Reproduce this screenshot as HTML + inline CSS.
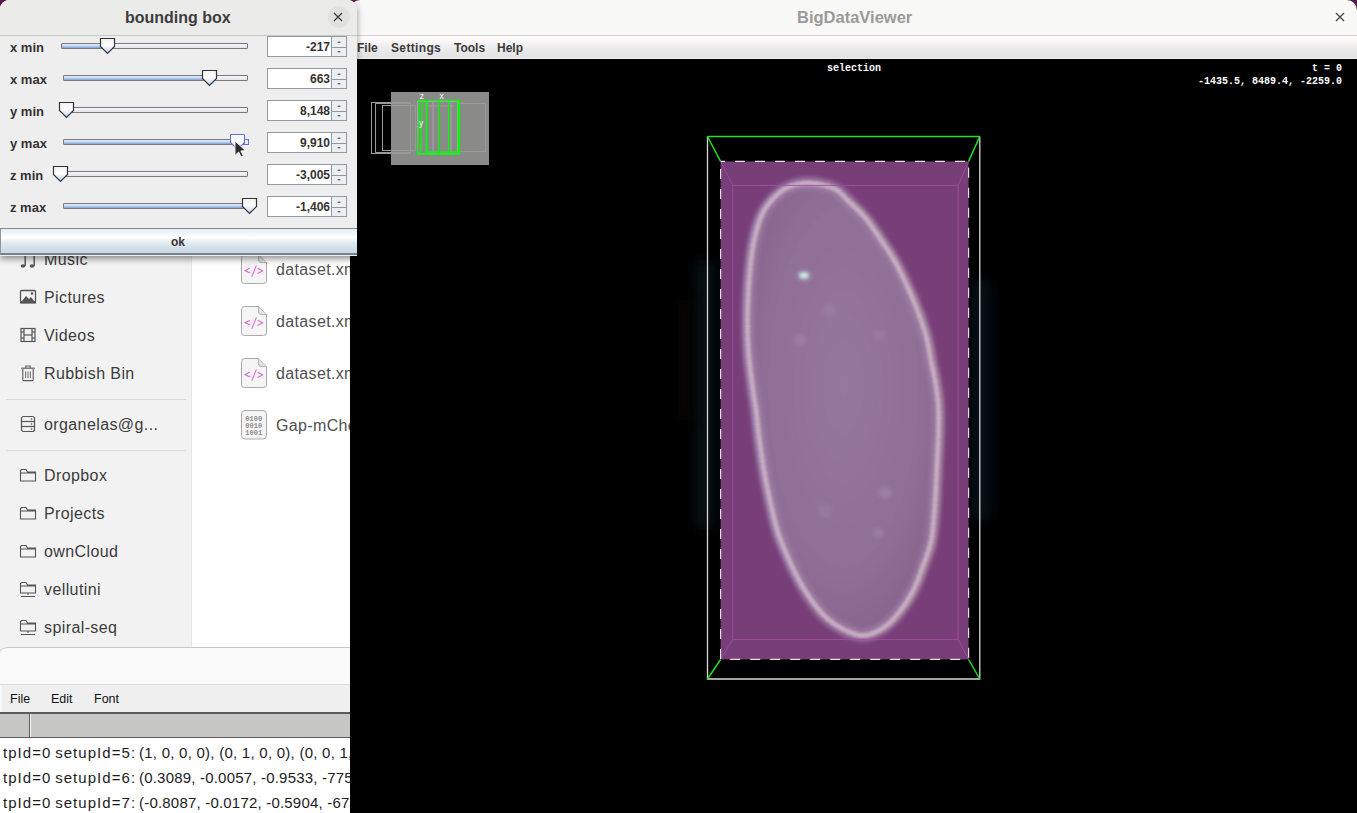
<!DOCTYPE html>
<html><head><meta charset="utf-8">
<style>
*{margin:0;padding:0;box-sizing:border-box}
html,body{width:1357px;height:813px;overflow:hidden;background:#5a1c50;font-family:"Liberation Sans",sans-serif}
.abs{position:absolute}
#fm{left:0;top:0;width:350px;height:647px;background:#fff;overflow:hidden;border-radius:10px 0 0 0}
#side{left:0;top:0;width:192px;height:647px;background:#f2f2f2;border-right:1px solid #e6e6e6}
.si{position:absolute;left:44px;font-size:16px;letter-spacing:.4px;color:#3c3c3c;line-height:16px;white-space:nowrap}
.sic{position:absolute;left:19px;width:18px;height:18px}
.sep{position:absolute;left:6px;width:180px;height:1px;background:#dadada}
.fi{position:absolute;left:276px;font-size:16px;letter-spacing:.35px;color:#505050;line-height:16px;white-space:nowrap}
.fic{position:absolute;left:240px;width:28px;height:32px}
#bw{left:0;top:647px;width:350px;height:166px;background:#fff;overflow:hidden}
#dlg{left:0;top:0;width:357px;height:256px;background:#eeeeee;border-radius:9px 9px 0 0;box-shadow:0 3px 6px rgba(0,0,0,.42)}
.lab{position:absolute;left:10px;font-weight:bold;font-size:13px;color:#333;line-height:13px;white-space:nowrap}
.trk{position:absolute;height:6px;border:1px solid #7a7a7a;background:linear-gradient(#f8f8fb,#e2e5ee);border-radius:1px}
.fill{position:absolute;left:0;top:0;bottom:0;background:linear-gradient(#e2ecf8,#bcd0ee 55%,#7c9cdc)}
.spn{position:absolute;left:267px;width:80px;height:21px;border:1px solid #8f9aa6;background:#fff}
.spn .v{position:absolute;right:16px;top:4px;font-weight:bold;font-size:12px;color:#333;line-height:12px}
.spn .b{position:absolute;right:0;top:0;width:15px;height:19px;background:#eceff2;border-left:1px solid #8f9aa6}
.spn .b:after{content:"";position:absolute;left:0;right:0;top:9.5px;height:1.5px;background:#8e98a0}
.ar{position:absolute;left:5px;width:0;height:0;border-left:2.5px solid transparent;border-right:2.5px solid transparent}
#bdv{left:350px;top:0;width:1007px;height:813px;background:#000;overflow:hidden;border-radius:10px 10px 0 0}
.mono{font-family:"Liberation Mono",monospace;font-weight:bold;font-size:10px;color:#fff;line-height:10px;white-space:nowrap}
.mb{position:absolute;top:41.5px;font-weight:bold;font-size:12px;color:#3a3a3a;line-height:12px}
.tp{letter-spacing:1.05px;word-spacing:-1.5px}
.tl{position:absolute;left:3px;font-size:15px;line-height:15px;white-space:nowrap;color:#1c1c1c}
</style></head><body>

<!-- FILE MANAGER -->
<div id="fm" class="abs">
  <div id="side" class="abs">
    <!-- Music -->
    <svg class="sic" style="top:251px" viewBox="0 0 18 18"><g fill="#555"><ellipse cx="4" cy="15" rx="2.3" ry="1.8"/><ellipse cx="13" cy="15" rx="2.3" ry="1.8"/><rect x="5.5" y="3" width="1.4" height="12"/><rect x="14.5" y="3" width="1.4" height="12"/></g></svg>
    <div class="si" style="top:252px">Music</div>
    <!-- Pictures -->
    <svg class="sic" style="top:288px" viewBox="0 0 18 18"><rect x="1.5" y="2.5" width="15" height="12" rx="1" fill="none" stroke="#555" stroke-width="1.3"/><rect x="1" y="13" width="16" height="2.5" fill="#555"/><path d="M3 13 L7 8 L10 11 L12 9 L15 13Z" fill="#555"/><circle cx="13" cy="5.5" r="1.3" fill="#555"/></svg>
    <div class="si" style="top:290px">Pictures</div>
    <!-- Videos -->
    <svg class="sic" style="top:326px" viewBox="0 0 18 18"><rect x="2" y="2.5" width="14" height="13" fill="none" stroke="#555" stroke-width="1.2"/><line x1="5" y1="2.5" x2="5" y2="15.5" stroke="#555" stroke-width="1.2"/><line x1="13" y1="2.5" x2="13" y2="15.5" stroke="#555" stroke-width="1.2"/><line x1="5" y1="9" x2="13" y2="9" stroke="#555" stroke-width="1.2"/><g stroke="#555" stroke-width="1.2"><line x1="2" y1="6" x2="5" y2="6"/><line x1="2" y1="12" x2="5" y2="12"/><line x1="13" y1="6" x2="16" y2="6"/><line x1="13" y1="12" x2="16" y2="12"/></g></svg>
    <div class="si" style="top:328px">Videos</div>
    <!-- Rubbish -->
    <svg class="sic" style="top:364px" viewBox="0 0 18 18"><g fill="none" stroke="#5a5a5a" stroke-width="1.1"><path d="M3.8 5 V15.5 Q3.8 16.6 4.9 16.6 H13.1 Q14.2 16.6 14.2 15.5 V5"/><line x1="2.2" y1="4.2" x2="15.8" y2="4.2"/><path d="M6.8 4 V2 H11.2 V4"/></g><g stroke="#5a5a5a" stroke-width=".9"><line x1="6.6" y1="7.5" x2="6.6" y2="14.2"/><line x1="9" y1="7.5" x2="9" y2="14.2"/><line x1="11.4" y1="7.5" x2="11.4" y2="14.2"/></g></svg>
    <div class="si" style="top:366px">Rubbish Bin</div>
    <div class="sep" style="top:399px"></div>
    <!-- organelas -->
    <svg class="sic" style="top:415px" viewBox="0 0 18 18"><g fill="none" stroke="#555" stroke-width="1.2"><rect x="2.5" y="1.5" width="13" height="15" rx="2"/><line x1="2.5" y1="6.5" x2="15.5" y2="6.5"/><line x1="2.5" y1="11.5" x2="15.5" y2="11.5"/></g><circle cx="12.5" cy="4" r=".8" fill="#555"/><circle cx="12.5" cy="9" r=".8" fill="#555"/><circle cx="12.5" cy="14" r=".8" fill="#555"/></svg>
    <div class="si" style="top:417px">organelas@g...</div>
    <div class="sep" style="top:450px"></div>
    <!-- folders -->
    <svg class="sic" style="top:466px" viewBox="0 0 18 18"><path d="M1.5 4.5 V15 H16.5 V6 H8.5 L7 3.5 H2.5Z M1.5 7 H16.5" fill="none" stroke="#555" stroke-width="1.1"/></svg>
    <div class="si" style="top:468px">Dropbox</div>
    <svg class="sic" style="top:504px" viewBox="0 0 18 18"><path d="M1.5 4.5 V15 H16.5 V6 H8.5 L7 3.5 H2.5Z M1.5 7 H16.5" fill="none" stroke="#555" stroke-width="1.1"/></svg>
    <div class="si" style="top:506px">Projects</div>
    <svg class="sic" style="top:542px" viewBox="0 0 18 18"><path d="M1.5 4.5 V15 H16.5 V6 H8.5 L7 3.5 H2.5Z M1.5 7 H16.5" fill="none" stroke="#555" stroke-width="1.1"/></svg>
    <div class="si" style="top:544px">ownCloud</div>
    <svg class="sic" style="top:580px" viewBox="0 0 18 18"><path d="M1.5 3.5 V13 H16.5 V5 H8.5 L7 2.5 H2.5Z M1.5 6 H16.5 M9 13 V15 M2 16.5 H16" fill="none" stroke="#555" stroke-width="1.1"/></svg>
    <div class="si" style="top:582px">vellutini</div>
    <svg class="sic" style="top:618px" viewBox="0 0 18 18"><path d="M1.5 3.5 V13 H16.5 V5 H8.5 L7 2.5 H2.5Z M1.5 6 H16.5 M9 13 V15 M2 16.5 H16" fill="none" stroke="#555" stroke-width="1.1"/></svg>
    <div class="si" style="top:620px">spiral-seq</div>
  </div>
  <!-- files -->
  <svg class="fic" style="top:254px" viewBox="0 0 28 32"><path d="M4.5 0.5 H18.5 L26.5 8.5 V26.5 Q26.5 29.5 23.5 29.5 H4.5 Q1.5 29.5 1.5 26.5 V3.5 Q1.5 0.5 4.5 0.5Z" fill="#f5f5f5" stroke="#a9a9a9" stroke-width="1"/><path d="M18.5 0.5 V6 Q18.5 8.5 21 8.5 H26.5" fill="#e2e2e2" stroke="#b5b5b5" stroke-width="1"/><path d="M9.7 14.2 L5 16.7 L10.3 19.1 M16.4 11.4 L11.8 22.8 M17.7 14.2 L22.6 17 L17.4 19.4" fill="none" stroke="#e06ad8" stroke-width="1.1"/></svg>
  <div class="fi" style="top:262px">dataset.xml</div>
  <svg class="fic" style="top:306px" viewBox="0 0 28 32"><path d="M4.5 0.5 H18.5 L26.5 8.5 V26.5 Q26.5 29.5 23.5 29.5 H4.5 Q1.5 29.5 1.5 26.5 V3.5 Q1.5 0.5 4.5 0.5Z" fill="#f5f5f5" stroke="#a9a9a9" stroke-width="1"/><path d="M18.5 0.5 V6 Q18.5 8.5 21 8.5 H26.5" fill="#e2e2e2" stroke="#b5b5b5" stroke-width="1"/><path d="M9.7 14.2 L5 16.7 L10.3 19.1 M16.4 11.4 L11.8 22.8 M17.7 14.2 L22.6 17 L17.4 19.4" fill="none" stroke="#e06ad8" stroke-width="1.1"/></svg>
  <div class="fi" style="top:314px">dataset.xml</div>
  <svg class="fic" style="top:358px" viewBox="0 0 28 32"><path d="M4.5 0.5 H18.5 L26.5 8.5 V26.5 Q26.5 29.5 23.5 29.5 H4.5 Q1.5 29.5 1.5 26.5 V3.5 Q1.5 0.5 4.5 0.5Z" fill="#f5f5f5" stroke="#a9a9a9" stroke-width="1"/><path d="M18.5 0.5 V6 Q18.5 8.5 21 8.5 H26.5" fill="#e2e2e2" stroke="#b5b5b5" stroke-width="1"/><path d="M9.7 14.2 L5 16.7 L10.3 19.1 M16.4 11.4 L11.8 22.8 M17.7 14.2 L22.6 17 L17.4 19.4" fill="none" stroke="#e06ad8" stroke-width="1.1"/></svg>
  <div class="fi" style="top:366px">dataset.xml</div>
  <svg class="fic" style="top:410px" viewBox="0 0 28 32"><path d="M5 0.5 H23 Q26.5 0.5 26.5 4 V25.5 Q26.5 29 23 29 H5 Q1.5 29 1.5 25.5 V4 Q1.5 0.5 5 0.5Z" fill="#f5f5f5" stroke="#a9a9a9" stroke-width="1"/><g font-family="Liberation Mono" font-size="7" font-weight="bold" fill="#8c8c8c"><text x="5.3" y="10.8">0100</text><text x="5.3" y="17.6">0010</text><text x="5.3" y="24.8">1001</text></g></svg>
  <div class="fi" style="top:418px">Gap-mCherry</div>
</div>

<!-- BOTTOM WINDOW -->
<div id="bw" class="abs">
  <div class="abs" style="left:0;top:0;width:350px;height:20px;background:#f2f2f2"></div>
  <div class="abs" style="left:-4px;top:0;width:364px;height:38px;background:#fafafa;border-top:1px solid #c9c9c9;border-left:1px solid #c9c9c9;border-radius:12px 0 0 0;border-bottom:1px solid #dcdcdc"></div>
  <div class="abs" style="left:0;top:38px;width:350px;height:27px;background:#efefef;border-left:2px solid #f8f8f8"></div>
  <div class="abs" style="left:10px;top:45.5px;font-size:12.5px;line-height:13px;color:#111">File</div>
  <div class="abs" style="left:51px;top:45.5px;font-size:12.5px;line-height:13px;color:#111">Edit</div>
  <div class="abs" style="left:94px;top:45.5px;font-size:12.5px;line-height:13px;color:#111">Font</div>
  <div class="abs" style="left:0;top:65px;width:350px;height:26px;background:#c6c6c4;border-top:2px solid #5c5c5c;border-bottom:1px solid #5c5c5c"></div>
  <div class="abs" style="left:30px;top:67px;width:1px;height:23px;background:#fafafa"></div>
  <div class="abs" style="left:29px;top:67px;width:1px;height:23px;background:#5c5c5c"></div>
  <div class="tl" style="top:98px"><span class="tp">tpId=0 setupId=5:</span></div><div class="tl" style="top:98px;left:139px;letter-spacing:.25px">(1, 0, 0, 0), (0, 1, 0, 0), (0, 0, 1, 0)</div>
  <div class="tl" style="top:123px"><span class="tp">tpId=0 setupId=6:</span></div><div class="tl" style="top:123px;left:139px;letter-spacing:.2px">(0.3089, -0.0057, -0.9533, -775.0)</div>
  <div class="tl" style="top:148px"><span class="tp">tpId=0 setupId=7:</span></div><div class="tl" style="top:148px;left:139px;letter-spacing:.2px">(-0.8087, -0.0172, -0.5904, -675.0)</div>
</div>

<!-- BDV -->
<div id="bdv" class="abs">
  <div class="abs" style="left:0;top:0;width:1007px;height:36px;background:#f8f9f6;border-bottom:1px solid #d4d4d4"></div>
  <div class="abs" style="left:447px;top:9px;font-weight:bold;font-size:16.5px;line-height:16px;color:#9a9a9a">BigDataViewer</div>
  <svg class="abs" style="left:985px;top:12px" width="10" height="10" viewBox="0 0 10 10"><path d="M1 1 L9 9 M9 1 L1 9" stroke="#4a4a4a" stroke-width="1.3"/></svg>
  <div class="abs" style="left:0;top:36px;width:1007px;height:23px;background:linear-gradient(#fefcfb,#fcfaf9 15%,#ebebeb 55%,#e2e2e2 95%,#eeeeee 95%)"></div>
  <div class="mb" style="left:7px">File</div>
  <div class="mb" style="left:41px;letter-spacing:.35px">Settings</div>
  <div class="mb" style="left:104px">Tools</div>
  <div class="mb" style="left:147px">Help</div>
  <!-- canvas overlays -->
  <div class="abs mono" style="left:477px;top:64px">selection</div>
  <div class="abs mono" style="right:15px;top:64px;text-align:right">t = 0</div>
  <div class="abs mono" style="right:15px;top:77px;text-align:right">-1435.5, 8489.4, -2259.0</div>
  <svg class="abs" style="left:0;top:0" width="1007" height="813" viewBox="350 0 1007 813">
    <defs>
      <filter id="blur2" x="-20%" y="-20%" width="140%" height="140%"><feGaussianBlur stdDeviation="2"/></filter>
      <filter id="blur6" x="-20%" y="-20%" width="140%" height="140%"><feGaussianBlur stdDeviation="6"/></filter>
      <filter id="blur3" x="-20%" y="-20%" width="140%" height="140%"><feGaussianBlur stdDeviation="3.5"/></filter>
      <filter id="glow" x="-200%" y="-50%" width="500%" height="200%"><feGaussianBlur stdDeviation="7"/></filter>
      <filter id="blur15" x="-50%" y="-50%" width="200%" height="200%"><feGaussianBlur stdDeviation="1.4"/></filter>
      <filter id="blur1"><feGaussianBlur stdDeviation="0.8"/></filter>
    </defs>
    <!-- minimap -->
    <rect x="391" y="92" width="98" height="73" fill="#8a8a88"/>
    <g fill="none" stroke="#9a9a9a" stroke-width="1">
      <rect x="371.5" y="102.5" width="39" height="51"/>
      <rect x="375.5" y="103.5" width="35" height="49"/>
      <rect x="382.5" y="105.5" width="33" height="45"/>
      <rect x="457.5" y="103.5" width="28" height="48"/>
    </g>
    <g fill="none" stroke="#c8a8c8" stroke-width=".8" opacity=".8"><rect x="417.5" y="101.5" width="40" height="52"/><line x1="433" y1="101" x2="433" y2="154"/><line x1="451" y1="101" x2="451" y2="154"/><line x1="425" y1="106" x2="455" y2="106" stroke="#aaa"/></g>
    <g fill="none" stroke="#0f0" stroke-width="1.3">
      <path d="M419.3 100.3 H459.4 V154.2 H417.6Z"/>
      <line x1="422.3" y1="100.3" x2="420.5" y2="154.2"/>
      <line x1="438.7" y1="100.3" x2="438.7" y2="154.2"/>
      <line x1="448.6" y1="100.3" x2="448.6" y2="154.2"/>
      <line x1="426" y1="152" x2="458" y2="152"/>
    </g>
    <g fill="none" stroke="#0f0" stroke-width="1.8"><line x1="426.6" y1="100.3" x2="426.6" y2="154.2"/><line x1="458.5" y1="100.3" x2="458.5" y2="154.2"/></g>
    <g font-family="Liberation Sans" font-size="8.5" fill="#fff"><text x="419.8" y="99.2">z</text><text x="439.4" y="99.2">x</text><text x="419" y="126">y</text></g>

    <!-- glows -->
    <rect x="696" y="260" width="18" height="270" fill="#0e2028" opacity=".55" filter="url(#glow)"/>
    <rect x="678" y="300" width="12" height="120" fill="#1a0808" opacity=".35" filter="url(#glow)"/>
    <rect x="972" y="280" width="18" height="240" fill="#0c2432" opacity=".55" filter="url(#glow)"/>
    <!-- bounding box -->
    <rect x="720.6" y="161.4" width="248" height="498" fill="#773e77"/>
    <!-- cell -->
    <g id="cell">
      <defs>
        <radialGradient id="cg" cx=".5" cy=".45" r=".6"><stop offset="0" stop-color="#96779c"/><stop offset=".7" stop-color="#8f6e95"/><stop offset="1" stop-color="#86638c"/></radialGradient>
        <clipPath id="lh"><rect x="700" y="150" width="120" height="440"/></clipPath>
        <clipPath id="rh"><rect x="850" y="150" width="130" height="500"/></clipPath>
      </defs>
      <path d="M808.8 183.1 C816.9 183.2 828.0 185.8 834.6 188.8 C841.2 191.8 843.4 196.2 848.5 201.1 C853.6 206.0 860.0 211.6 865.4 218.0 C870.8 224.4 875.8 232.4 880.7 239.6 C885.6 246.8 890.2 253.4 894.6 261.1 C899.0 268.8 902.9 277.1 906.9 285.7 C910.9 294.3 915.2 304.6 918.4 313.0 C921.6 321.4 924.0 328.4 926.1 336.1 C928.2 343.8 929.2 351.5 930.7 359.2 C932.2 366.9 934.1 374.1 935.4 382.2 C936.7 390.3 938.0 399.1 938.5 408.0 C939.0 416.9 938.7 426.1 938.4 435.8 C938.1 445.6 937.4 456.3 936.9 466.5 C936.4 476.7 936.0 487.9 935.4 497.2 C934.8 506.4 934.3 514.4 933.5 522.0 C932.7 529.6 932.5 535.6 930.7 543.0 C929.0 550.4 925.8 558.4 923.0 566.1 C920.2 573.8 917.4 582.0 913.8 589.2 C910.2 596.4 906.4 602.9 901.5 609.2 C896.6 615.5 890.8 622.6 884.5 627.0 C878.2 631.4 870.6 635.0 864.0 635.5 C857.4 636.0 850.9 633.0 844.6 630.0 C838.3 627.0 831.8 622.7 826.1 617.6 C820.5 612.5 815.6 606.1 810.7 599.2 C805.8 592.3 801.0 583.8 796.9 576.1 C792.8 568.4 789.3 560.5 786.1 553.0 C782.9 545.5 780.1 539.5 777.5 531.0 C774.9 522.5 772.6 512.1 770.4 502.2 C768.2 492.3 766.0 481.7 764.2 471.5 C762.4 461.3 761.0 451.1 759.6 440.8 C758.2 430.6 757.3 419.8 756.0 410.0 C754.7 400.2 753.2 391.9 752.0 382.2 C750.8 372.4 749.2 361.7 748.5 351.5 C747.8 341.3 747.5 331.1 747.5 320.8 C747.5 310.6 748.0 299.2 748.5 290.0 C749.0 280.8 749.7 273.0 750.5 265.3 C751.3 257.6 752.0 251.2 753.5 243.8 C755.0 236.4 757.1 227.4 759.6 220.7 C762.1 214.0 764.4 209.2 768.8 203.8 C773.1 198.4 779.0 191.9 785.7 188.5 C792.4 185.1 800.6 183.0 808.8 183.1 Z" fill="url(#cg)" filter="url(#blur3)"/>
      <ellipse cx="804" cy="275.5" rx="7" ry="5" fill="#b8c8cc" opacity=".5" filter="url(#blur2)"/>
      <ellipse cx="804" cy="275.5" rx="4.5" ry="3" fill="#c8e4e0" filter="url(#blur15)"/>
      <circle cx="800" cy="340" r="6" fill="#a98aac" opacity=".45" filter="url(#blur2)"/>
      <circle cx="829" cy="310" r="7" fill="#a08aac" opacity=".35" filter="url(#blur2)"/>
      <circle cx="880" cy="335" r="6" fill="#a58ab0" opacity=".35" filter="url(#blur2)"/>
      <circle cx="885" cy="493" r="6" fill="#a98cb4" opacity=".5" filter="url(#blur2)"/>
      <circle cx="878" cy="533" r="5" fill="#a98cb4" opacity=".45" filter="url(#blur2)"/>
      <circle cx="825" cy="511" r="7" fill="#a58ab0" opacity=".3" filter="url(#blur2)"/>
      <g clip-path="url(#lh)"><path d="M808.8 183.1 C816.9 183.2 828.0 185.8 834.6 188.8 C841.2 191.8 843.4 196.2 848.5 201.1 C853.6 206.0 860.0 211.6 865.4 218.0 C870.8 224.4 875.8 232.4 880.7 239.6 C885.6 246.8 890.2 253.4 894.6 261.1 C899.0 268.8 902.9 277.1 906.9 285.7 C910.9 294.3 915.2 304.6 918.4 313.0 C921.6 321.4 924.0 328.4 926.1 336.1 C928.2 343.8 929.2 351.5 930.7 359.2 C932.2 366.9 934.1 374.1 935.4 382.2 C936.7 390.3 938.0 399.1 938.5 408.0 C939.0 416.9 938.7 426.1 938.4 435.8 C938.1 445.6 937.4 456.3 936.9 466.5 C936.4 476.7 936.0 487.9 935.4 497.2 C934.8 506.4 934.3 514.4 933.5 522.0 C932.7 529.6 932.5 535.6 930.7 543.0 C929.0 550.4 925.8 558.4 923.0 566.1 C920.2 573.8 917.4 582.0 913.8 589.2 C910.2 596.4 906.4 602.9 901.5 609.2 C896.6 615.5 890.8 622.6 884.5 627.0 C878.2 631.4 870.6 635.0 864.0 635.5 C857.4 636.0 850.9 633.0 844.6 630.0 C838.3 627.0 831.8 622.7 826.1 617.6 C820.5 612.5 815.6 606.1 810.7 599.2 C805.8 592.3 801.0 583.8 796.9 576.1 C792.8 568.4 789.3 560.5 786.1 553.0 C782.9 545.5 780.1 539.5 777.5 531.0 C774.9 522.5 772.6 512.1 770.4 502.2 C768.2 492.3 766.0 481.7 764.2 471.5 C762.4 461.3 761.0 451.1 759.6 440.8 C758.2 430.6 757.3 419.8 756.0 410.0 C754.7 400.2 753.2 391.9 752.0 382.2 C750.8 372.4 749.2 361.7 748.5 351.5 C747.8 341.3 747.5 331.1 747.5 320.8 C747.5 310.6 748.0 299.2 748.5 290.0 C749.0 280.8 749.7 273.0 750.5 265.3 C751.3 257.6 752.0 251.2 753.5 243.8 C755.0 236.4 757.1 227.4 759.6 220.7 C762.1 214.0 764.4 209.2 768.8 203.8 C773.1 198.4 779.0 191.9 785.7 188.5 C792.4 185.1 800.6 183.0 808.8 183.1 Z" fill="none" stroke="#8d8ce0" stroke-width="2.5" opacity=".5" transform="translate(-3.5 0)" filter="url(#blur1)"/></g>
      <g clip-path="url(#rh)"><path d="M808.8 183.1 C816.9 183.2 828.0 185.8 834.6 188.8 C841.2 191.8 843.4 196.2 848.5 201.1 C853.6 206.0 860.0 211.6 865.4 218.0 C870.8 224.4 875.8 232.4 880.7 239.6 C885.6 246.8 890.2 253.4 894.6 261.1 C899.0 268.8 902.9 277.1 906.9 285.7 C910.9 294.3 915.2 304.6 918.4 313.0 C921.6 321.4 924.0 328.4 926.1 336.1 C928.2 343.8 929.2 351.5 930.7 359.2 C932.2 366.9 934.1 374.1 935.4 382.2 C936.7 390.3 938.0 399.1 938.5 408.0 C939.0 416.9 938.7 426.1 938.4 435.8 C938.1 445.6 937.4 456.3 936.9 466.5 C936.4 476.7 936.0 487.9 935.4 497.2 C934.8 506.4 934.3 514.4 933.5 522.0 C932.7 529.6 932.5 535.6 930.7 543.0 C929.0 550.4 925.8 558.4 923.0 566.1 C920.2 573.8 917.4 582.0 913.8 589.2 C910.2 596.4 906.4 602.9 901.5 609.2 C896.6 615.5 890.8 622.6 884.5 627.0 C878.2 631.4 870.6 635.0 864.0 635.5 C857.4 636.0 850.9 633.0 844.6 630.0 C838.3 627.0 831.8 622.7 826.1 617.6 C820.5 612.5 815.6 606.1 810.7 599.2 C805.8 592.3 801.0 583.8 796.9 576.1 C792.8 568.4 789.3 560.5 786.1 553.0 C782.9 545.5 780.1 539.5 777.5 531.0 C774.9 522.5 772.6 512.1 770.4 502.2 C768.2 492.3 766.0 481.7 764.2 471.5 C762.4 461.3 761.0 451.1 759.6 440.8 C758.2 430.6 757.3 419.8 756.0 410.0 C754.7 400.2 753.2 391.9 752.0 382.2 C750.8 372.4 749.2 361.7 748.5 351.5 C747.8 341.3 747.5 331.1 747.5 320.8 C747.5 310.6 748.0 299.2 748.5 290.0 C749.0 280.8 749.7 273.0 750.5 265.3 C751.3 257.6 752.0 251.2 753.5 243.8 C755.0 236.4 757.1 227.4 759.6 220.7 C762.1 214.0 764.4 209.2 768.8 203.8 C773.1 198.4 779.0 191.9 785.7 188.5 C792.4 185.1 800.6 183.0 808.8 183.1 Z" fill="none" stroke="#c09070" stroke-width="2.5" opacity=".4" transform="translate(4 0)" filter="url(#blur1)"/></g>
      <path d="M808.8 183.1 C816.9 183.2 828.0 185.8 834.6 188.8 C841.2 191.8 843.4 196.2 848.5 201.1 C853.6 206.0 860.0 211.6 865.4 218.0 C870.8 224.4 875.8 232.4 880.7 239.6 C885.6 246.8 890.2 253.4 894.6 261.1 C899.0 268.8 902.9 277.1 906.9 285.7 C910.9 294.3 915.2 304.6 918.4 313.0 C921.6 321.4 924.0 328.4 926.1 336.1 C928.2 343.8 929.2 351.5 930.7 359.2 C932.2 366.9 934.1 374.1 935.4 382.2 C936.7 390.3 938.0 399.1 938.5 408.0 C939.0 416.9 938.7 426.1 938.4 435.8 C938.1 445.6 937.4 456.3 936.9 466.5 C936.4 476.7 936.0 487.9 935.4 497.2 C934.8 506.4 934.3 514.4 933.5 522.0 C932.7 529.6 932.5 535.6 930.7 543.0 C929.0 550.4 925.8 558.4 923.0 566.1 C920.2 573.8 917.4 582.0 913.8 589.2 C910.2 596.4 906.4 602.9 901.5 609.2 C896.6 615.5 890.8 622.6 884.5 627.0 C878.2 631.4 870.6 635.0 864.0 635.5 C857.4 636.0 850.9 633.0 844.6 630.0 C838.3 627.0 831.8 622.7 826.1 617.6 C820.5 612.5 815.6 606.1 810.7 599.2 C805.8 592.3 801.0 583.8 796.9 576.1 C792.8 568.4 789.3 560.5 786.1 553.0 C782.9 545.5 780.1 539.5 777.5 531.0 C774.9 522.5 772.6 512.1 770.4 502.2 C768.2 492.3 766.0 481.7 764.2 471.5 C762.4 461.3 761.0 451.1 759.6 440.8 C758.2 430.6 757.3 419.8 756.0 410.0 C754.7 400.2 753.2 391.9 752.0 382.2 C750.8 372.4 749.2 361.7 748.5 351.5 C747.8 341.3 747.5 331.1 747.5 320.8 C747.5 310.6 748.0 299.2 748.5 290.0 C749.0 280.8 749.7 273.0 750.5 265.3 C751.3 257.6 752.0 251.2 753.5 243.8 C755.0 236.4 757.1 227.4 759.6 220.7 C762.1 214.0 764.4 209.2 768.8 203.8 C773.1 198.4 779.0 191.9 785.7 188.5 C792.4 185.1 800.6 183.0 808.8 183.1 Z" fill="none" stroke="#a688ac" stroke-width="12" opacity=".7" filter="url(#blur2)"/>
      <path d="M808.8 183.1 C816.9 183.2 828.0 185.8 834.6 188.8 C841.2 191.8 843.4 196.2 848.5 201.1 C853.6 206.0 860.0 211.6 865.4 218.0 C870.8 224.4 875.8 232.4 880.7 239.6 C885.6 246.8 890.2 253.4 894.6 261.1 C899.0 268.8 902.9 277.1 906.9 285.7 C910.9 294.3 915.2 304.6 918.4 313.0 C921.6 321.4 924.0 328.4 926.1 336.1 C928.2 343.8 929.2 351.5 930.7 359.2 C932.2 366.9 934.1 374.1 935.4 382.2 C936.7 390.3 938.0 399.1 938.5 408.0 C939.0 416.9 938.7 426.1 938.4 435.8 C938.1 445.6 937.4 456.3 936.9 466.5 C936.4 476.7 936.0 487.9 935.4 497.2 C934.8 506.4 934.3 514.4 933.5 522.0 C932.7 529.6 932.5 535.6 930.7 543.0 C929.0 550.4 925.8 558.4 923.0 566.1 C920.2 573.8 917.4 582.0 913.8 589.2 C910.2 596.4 906.4 602.9 901.5 609.2 C896.6 615.5 890.8 622.6 884.5 627.0 C878.2 631.4 870.6 635.0 864.0 635.5 C857.4 636.0 850.9 633.0 844.6 630.0 C838.3 627.0 831.8 622.7 826.1 617.6 C820.5 612.5 815.6 606.1 810.7 599.2 C805.8 592.3 801.0 583.8 796.9 576.1 C792.8 568.4 789.3 560.5 786.1 553.0 C782.9 545.5 780.1 539.5 777.5 531.0 C774.9 522.5 772.6 512.1 770.4 502.2 C768.2 492.3 766.0 481.7 764.2 471.5 C762.4 461.3 761.0 451.1 759.6 440.8 C758.2 430.6 757.3 419.8 756.0 410.0 C754.7 400.2 753.2 391.9 752.0 382.2 C750.8 372.4 749.2 361.7 748.5 351.5 C747.8 341.3 747.5 331.1 747.5 320.8 C747.5 310.6 748.0 299.2 748.5 290.0 C749.0 280.8 749.7 273.0 750.5 265.3 C751.3 257.6 752.0 251.2 753.5 243.8 C755.0 236.4 757.1 227.4 759.6 220.7 C762.1 214.0 764.4 209.2 768.8 203.8 C773.1 198.4 779.0 191.9 785.7 188.5 C792.4 185.1 800.6 183.0 808.8 183.1 Z" fill="none" stroke="#c8aec8" stroke-width="3" opacity=".6" filter="url(#blur1)"/>
      <path d="M808.8 183.1 C816.9 183.2 828.0 185.8 834.6 188.8 C841.2 191.8 843.4 196.2 848.5 201.1 C853.6 206.0 860.0 211.6 865.4 218.0 C870.8 224.4 875.8 232.4 880.7 239.6 C885.6 246.8 890.2 253.4 894.6 261.1 C899.0 268.8 902.9 277.1 906.9 285.7 C910.9 294.3 915.2 304.6 918.4 313.0 C921.6 321.4 924.0 328.4 926.1 336.1 C928.2 343.8 929.2 351.5 930.7 359.2 C932.2 366.9 934.1 374.1 935.4 382.2 C936.7 390.3 938.0 399.1 938.5 408.0 C939.0 416.9 938.7 426.1 938.4 435.8 C938.1 445.6 937.4 456.3 936.9 466.5 C936.4 476.7 936.0 487.9 935.4 497.2 C934.8 506.4 934.3 514.4 933.5 522.0 C932.7 529.6 932.5 535.6 930.7 543.0 C929.0 550.4 925.8 558.4 923.0 566.1 C920.2 573.8 917.4 582.0 913.8 589.2 C910.2 596.4 906.4 602.9 901.5 609.2 C896.6 615.5 890.8 622.6 884.5 627.0 C878.2 631.4 870.6 635.0 864.0 635.5 C857.4 636.0 850.9 633.0 844.6 630.0 C838.3 627.0 831.8 622.7 826.1 617.6 C820.5 612.5 815.6 606.1 810.7 599.2 C805.8 592.3 801.0 583.8 796.9 576.1 C792.8 568.4 789.3 560.5 786.1 553.0 C782.9 545.5 780.1 539.5 777.5 531.0 C774.9 522.5 772.6 512.1 770.4 502.2 C768.2 492.3 766.0 481.7 764.2 471.5 C762.4 461.3 761.0 451.1 759.6 440.8 C758.2 430.6 757.3 419.8 756.0 410.0 C754.7 400.2 753.2 391.9 752.0 382.2 C750.8 372.4 749.2 361.7 748.5 351.5 C747.8 341.3 747.5 331.1 747.5 320.8 C747.5 310.6 748.0 299.2 748.5 290.0 C749.0 280.8 749.7 273.0 750.5 265.3 C751.3 257.6 752.0 251.2 753.5 243.8 C755.0 236.4 757.1 227.4 759.6 220.7 C762.1 214.0 764.4 209.2 768.8 203.8 C773.1 198.4 779.0 191.9 785.7 188.5 C792.4 185.1 800.6 183.0 808.8 183.1 Z" fill="none" stroke="#e2bcd8" stroke-width="5.5" stroke-dasharray="2 4.2" opacity=".85" filter="url(#blur1)"/>
      <path d="M808.8 183.1 C816.9 183.2 828.0 185.8 834.6 188.8 C841.2 191.8 843.4 196.2 848.5 201.1 C853.6 206.0 860.0 211.6 865.4 218.0 C870.8 224.4 875.8 232.4 880.7 239.6 C885.6 246.8 890.2 253.4 894.6 261.1 C899.0 268.8 902.9 277.1 906.9 285.7 C910.9 294.3 915.2 304.6 918.4 313.0 C921.6 321.4 924.0 328.4 926.1 336.1 C928.2 343.8 929.2 351.5 930.7 359.2 C932.2 366.9 934.1 374.1 935.4 382.2 C936.7 390.3 938.0 399.1 938.5 408.0 C939.0 416.9 938.7 426.1 938.4 435.8 C938.1 445.6 937.4 456.3 936.9 466.5 C936.4 476.7 936.0 487.9 935.4 497.2 C934.8 506.4 934.3 514.4 933.5 522.0 C932.7 529.6 932.5 535.6 930.7 543.0 C929.0 550.4 925.8 558.4 923.0 566.1 C920.2 573.8 917.4 582.0 913.8 589.2 C910.2 596.4 906.4 602.9 901.5 609.2 C896.6 615.5 890.8 622.6 884.5 627.0 C878.2 631.4 870.6 635.0 864.0 635.5 C857.4 636.0 850.9 633.0 844.6 630.0 C838.3 627.0 831.8 622.7 826.1 617.6 C820.5 612.5 815.6 606.1 810.7 599.2 C805.8 592.3 801.0 583.8 796.9 576.1 C792.8 568.4 789.3 560.5 786.1 553.0 C782.9 545.5 780.1 539.5 777.5 531.0 C774.9 522.5 772.6 512.1 770.4 502.2 C768.2 492.3 766.0 481.7 764.2 471.5 C762.4 461.3 761.0 451.1 759.6 440.8 C758.2 430.6 757.3 419.8 756.0 410.0 C754.7 400.2 753.2 391.9 752.0 382.2 C750.8 372.4 749.2 361.7 748.5 351.5 C747.8 341.3 747.5 331.1 747.5 320.8 C747.5 310.6 748.0 299.2 748.5 290.0 C749.0 280.8 749.7 273.0 750.5 265.3 C751.3 257.6 752.0 251.2 753.5 243.8 C755.0 236.4 757.1 227.4 759.6 220.7 C762.1 214.0 764.4 209.2 768.8 203.8 C773.1 198.4 779.0 191.9 785.7 188.5 C792.4 185.1 800.6 183.0 808.8 183.1 Z" fill="none" stroke="#d6dcc6" stroke-width="5" stroke-dasharray="1.8 4.4" stroke-dashoffset="3" opacity=".7" filter="url(#blur1)"/>
    </g>
    <!-- inner rect lines -->
    <g stroke="#a44ea4" stroke-width="1" fill="none" opacity=".85">
      <rect x="732.8" y="185.4" width="225.3" height="454"/>
      <line x1="720.6" y1="161.4" x2="732.8" y2="185.4"/>
      <line x1="968.6" y1="161.4" x2="958.1" y2="185.4"/>
      <line x1="720.6" y1="659.5" x2="732.8" y2="639.4"/>
      <line x1="968.6" y1="659.5" x2="958.1" y2="639.4"/>
    </g>
    <!-- dashed border -->
    <rect x="720.6" y="161.4" width="248" height="498" fill="none" stroke="#eadcea" stroke-width="1.2" stroke-dasharray="10 10" stroke-dashoffset="5.6"/>
    <!-- outer -->
    <g stroke="#d8d8d8" stroke-width="1.3" fill="none"><path d="M707.5 136.5 V679 H979.8 V136.5"/></g>
    <g stroke="#22e022" stroke-width="1.5" fill="none">
      <line x1="707.5" y1="136.5" x2="979.8" y2="136.5"/>
      <line x1="707.5" y1="136.5" x2="720.6" y2="161.4"/>
      <line x1="979.8" y1="136.5" x2="968.6" y2="161.4"/>
      <line x1="707.5" y1="679" x2="720.6" y2="659.5"/>
      <line x1="979.8" y1="679" x2="968.6" y2="659.5"/>
    </g>
  </svg>
</div>

<!-- DIALOG -->
<div id="dlg" class="abs">
  <div class="abs" style="left:0;top:0;width:357px;height:36px;border-bottom:1px solid #c8c8c8;border-radius:9px 9px 0 0;background:#ebebea"></div>
  <div class="abs" style="left:125px;top:10px;font-weight:bold;font-size:16px;line-height:16px;color:#3d3d3d">bounding box</div>
  <div class="abs" style="left:328px;top:6px;width:22px;height:22px;border-radius:50%;background:#e1e1e0"></div>
  <svg class="abs" style="left:333px;top:12px" width="10" height="10" viewBox="0 0 10 10"><path d="M1 1 L9 9 M9 1 L1 9" stroke="#3a3a3a" stroke-width="1.2"/></svg>

  <div class="lab" style="top:41px">x min</div>
  <div class="lab" style="top:73px">x max</div>
  <div class="lab" style="top:105px">y min</div>
  <div class="lab" style="top:137px">y max</div>
  <div class="lab" style="top:169px">z min</div>
  <div class="lab" style="top:201px">z max</div>

  <div class="trk" style="left:61px;top:43px;width:187px"><div class="fill" style="width:40px"></div></div>
  <div class="trk" style="left:63px;top:75px;width:185px"><div class="fill" style="width:140px"></div></div>
  <div class="trk" style="left:61px;top:107px;width:187px"></div>
  <div class="trk" style="left:63px;top:139px;width:185px"><div class="fill" style="width:170px"></div></div>
  <div class="trk" style="left:61px;top:171px;width:187px"></div>
  <div class="trk" style="left:63px;top:203px;width:185px"><div class="fill" style="width:180px"></div></div>
  <svg class="abs" style="left:0;top:0" width="357" height="256">
    <defs><linearGradient id="th" x1="0" y1="0" x2="0" y2="1"><stop offset="0" stop-color="#f0f0f0"/><stop offset=".45" stop-color="#ffffff"/><stop offset="1" stop-color="#b8d0f0"/></linearGradient></defs>
    <g stroke="#333" stroke-width="1.2" fill="url(#th)">
      <path d="M100.5 38.5 H114.5 V46.5 L107.5 53.5 L100.5 46.5Z"/>
      <path d="M202.5 70.5 H216.5 V78.5 L209.5 85.5 L202.5 78.5Z"/>
      <path d="M59.5 102.5 H73.5 V110.5 L66.5 117.5 L59.5 110.5Z"/>
      <path d="M53.5 166.5 H67.5 V174.5 L60.5 181.5 L53.5 174.5Z"/>
      <path d="M242.5 198.5 H256.5 V206.5 L249.5 213.5 L242.5 206.5Z"/>
    </g>
    <!-- y max thumb (hover/pressed) -->
    <defs><linearGradient id="th2" x1="0" y1="0" x2="0" y2="1"><stop offset="0" stop-color="#f4f6fa"/><stop offset=".5" stop-color="#ffffff"/><stop offset="1" stop-color="#cde6f6"/></linearGradient></defs>
    <rect x="244.5" y="139.5" width="4" height="5" fill="#e6eef8" stroke="#6474c8" stroke-width="1"/>
    <path d="M231.5 134.5 H243.5 Q244.5 134.5 244.5 135.5 V142.5 L237.5 149.5 L230.5 142.5 V135.5 Q230.5 134.5 231.5 134.5Z" fill="url(#th2)" stroke="#6474c8" stroke-width="1.1"/>
    <!-- cursor -->
    <path d="M235 141 L235 155.5 L238.6 152 L241.2 157 L243.4 156 L240.9 151 L245.5 150.6Z" fill="#2e2e2e" stroke="#fff" stroke-width=".9" stroke-linejoin="round"/>
  </svg>

  <div class="spn" style="top:36px"><div class="v">-217</div><div class="b"><div class="ar" style="top:4px;border-bottom:2px solid #707070"></div><div class="ar" style="top:14px;border-top:2px solid #707070"></div></div></div>
  <div class="spn" style="top:68px"><div class="v">663</div><div class="b"><div class="ar" style="top:4px;border-bottom:2px solid #707070"></div><div class="ar" style="top:14px;border-top:2px solid #707070"></div></div></div>
  <div class="spn" style="top:100px"><div class="v">8,148</div><div class="b"><div class="ar" style="top:4px;border-bottom:2px solid #707070"></div><div class="ar" style="top:14px;border-top:2px solid #707070"></div></div></div>
  <div class="spn" style="top:132px"><div class="v">9,910</div><div class="b"><div class="ar" style="top:4px;border-bottom:2px solid #707070"></div><div class="ar" style="top:14px;border-top:2px solid #707070"></div></div></div>
  <div class="spn" style="top:164px"><div class="v">-3,005</div><div class="b"><div class="ar" style="top:4px;border-bottom:2px solid #707070"></div><div class="ar" style="top:14px;border-top:2px solid #707070"></div></div></div>
  <div class="spn" style="top:196px"><div class="v">-1,406</div><div class="b"><div class="ar" style="top:4px;border-bottom:2px solid #707070"></div><div class="ar" style="top:14px;border-top:2px solid #707070"></div></div></div>

  <div class="abs" style="left:0;top:228px;width:357px;height:27px;border-top:1px solid #7f8d99;border-bottom:2px solid #76828d;border-left:1px solid #8a96a0;background:linear-gradient(#e4edf6,#ffffff 35%,#dfe9f1 60%,#c7d6e1)"></div>
  <div class="abs" style="left:171px;top:236px;font-weight:bold;font-size:12px;line-height:12px;color:#333">ok</div>
</div>

</body></html>
